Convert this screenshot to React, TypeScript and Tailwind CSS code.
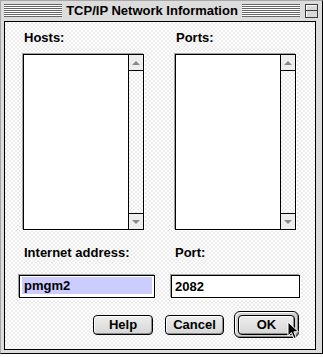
const dots =
  'bg-[#ececec] bg-[radial-gradient(circle_at_1px_1px,#ffffff_0.8px,transparent_1.1px),radial-gradient(circle_at_3px_3px,#ffffff_0.8px,transparent_1.1px)] bg-[length:4px_4px]';

const Stripes = () => (
  <div className="h-[13px] flex-1 bg-[repeating-linear-gradient(to_bottom,#666666_0px,#666666_1px,#ffffff_1px,#ffffff_2px)]" />
);

const ScrollList = () => (
  <div className="flex h-[176px] w-[121px] border border-black bg-white shadow-[-1px_-1px_0_#a0a0a0,1px_1px_0_#ffffff]">
    <div className="flex-1" />
    <div className={`flex w-[15px] flex-col border-l border-black ${dots}`}>
      <div className="flex h-[16px] items-center justify-center border-b border-black bg-[#eeeeee]">
        <div className="h-0 w-0 border-x-[4px] border-b-[4px] border-x-transparent border-b-[#8a8a8a]" />
      </div>
      <div className="flex-1" />
      <div className="flex h-[16px] items-center justify-center border-t border-black bg-[#eeeeee]">
        <div className="h-0 w-0 border-x-[4px] border-t-[4px] border-x-transparent border-t-[#8a8a8a]" />
      </div>
    </div>
  </div>
);

const Button = ({ label, width }: { label: string; width: string }) => (
  <div
    className={`${width} flex h-[20px] items-center justify-center rounded-[4px] border border-black bg-[linear-gradient(to_bottom,#eeeeee,#d6d6d6)] text-[13px] font-bold text-black shadow-[inset_1px_1px_0_#ffffff,inset_-1px_-1px_0_#8c8c8c]`}
  >
    {label}
  </div>
);

const Cursor = () => (
  <svg className="absolute left-[287px] top-[321px]" width="13" height="19" viewBox="0 0 13 19">
    <path
      d="M1 1 L1 15 L4.5 11.5 L7 17.5 L9.2 16.6 L6.8 10.8 L11.5 10.8 Z"
      fill="#000000"
      stroke="#ffffff"
      strokeWidth="1"
      strokeLinejoin="miter"
    />
  </svg>
);

export default function App() {
  return (
    <div className="relative h-[357px] w-[323px] bg-white font-['Liberation_Sans',Arial,sans-serif] text-black">
      <div className="flex h-[354px] w-[323px] flex-col border-b border-l border-r border-t border-b-black border-l-[#a8a8a8] border-r-black border-t-[#a8a8a8] bg-[#dcdcdc] pb-[3px] pl-[3px] pr-[6px]">
        <div className="flex h-[20px] items-center pb-px">
          <Stripes />
          <div className="px-[4px] text-[13px] leading-none font-bold">TCP/IP Network Information</div>
          <Stripes />
          <div className="ml-[5px] mr-[-2px] flex h-[14px] w-[13px] flex-col border border-[#3a3a3a] bg-[#d8d8d8] shadow-[inset_1px_1px_0_#ffffff]">
            <div className="flex-1 border-b border-[#3a3a3a]" />
            <div className="flex-1" />
          </div>
        </div>

        <div className={`flex flex-1 flex-col border border-black ${dots}`}>
          <div className="flex gap-[31px] pl-[18px] pt-[8px]">
            <div className="flex flex-col gap-[8px]">
              <div className="pl-px text-[13px] leading-[16px] font-bold">Hosts:</div>
              <ScrollList />
            </div>
            <div className="flex flex-col gap-[8px]">
              <div className="pl-px text-[13px] leading-[16px] font-bold">Ports:</div>
              <ScrollList />
            </div>
          </div>

          <div className="mt-[15px] flex gap-[31px] pl-[18px]">
            <div className="w-[121px] pl-px text-[13px] leading-[16px] font-bold">Internet address:</div>
            <div className="w-[121px] text-[13px] leading-[16px] font-bold">Port:</div>
          </div>

          <div className="mt-[14px] flex gap-[16px] pl-[14px]">
            <div className="h-[23px] w-[136px] border border-black bg-white px-[2px] pb-[3px] pt-px shadow-[-1px_-1px_0_#a0a0a0,1px_1px_0_#ffffff]">
              <div className="flex h-full items-center bg-[#ccccff] px-[2px] text-[13px] font-bold">pmgm2</div>
            </div>
            <div className="flex h-[23px] w-[129px] items-center border border-black bg-white px-[3px] text-[13px] font-bold shadow-[-1px_-1px_0_#a0a0a0,1px_1px_0_#ffffff]">
              2082
            </div>
          </div>

          <div className="mt-[13px] flex items-center justify-end pr-[16px]">
            <Button label="Help" width="w-[60px]" />
            <div className="ml-[12px]">
              <Button label="Cancel" width="w-[59px]" />
            </div>
            <div className="ml-[10px] rounded-[6px] border border-black bg-[#d0d0d0] px-[3px] py-[2.5px] shadow-[inset_1px_1px_0_#ffffff,inset_-1px_-1px_0_#8c8c8c]">
              <Button label="OK" width="w-[57px]" />
            </div>
          </div>
        </div>
      </div>
      <Cursor />
    </div>
  );
}
